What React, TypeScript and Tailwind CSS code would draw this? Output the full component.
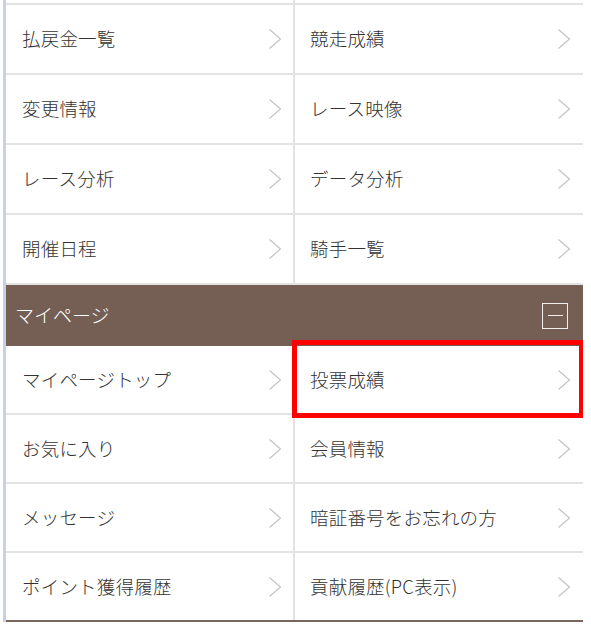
import React from "react";

const Chevron = () => (
  <svg width="14" height="22" viewBox="0 0 14 22" fill="none" className="shrink-0">
    <path d="M1.5 1.5 L12.5 11 L1.5 20.5" stroke="#c4c4c4" strokeWidth="1.2" />
  </svg>
);

const Cell = ({ label, left }: { label: string; left?: boolean }) => (
  <div
    className={
      left
        ? "w-[287px] h-full flex items-center justify-between pl-[16px] pr-[11px]"
        : "flex-1 h-full flex items-center justify-between pl-[15px] pr-[12px] border-l-2 border-[#e3e3e3]"
    }
  >
    <span className="text-[18.5px] font-light text-[#333333] tracking-[0.2px]">{label}</span>
    <Chevron />
  </div>
);

const Row = ({ a, b, last, short }: { a: string; b: string; last?: boolean; short?: boolean }) => (
  <div
    className={
      "flex border-b-2 " +
      (short ? "h-[69px] " : "h-[70px] ") +
      (last ? "border-[#7a665c]" : "border-[#e3e3e3]")
    }
  >
    <Cell label={a} left />
    <Cell label={b} />
  </div>
);

export default function App() {
  return (
    <div
      className="w-[591px] h-[625px] bg-white overflow-hidden pl-[3px] relative"
      style={{ fontFamily: '"Noto Sans CJK JP", "Noto Sans", sans-serif' }}
    >
      <div className="w-[580px] border-l-[3px] border-[#c8d0e3]">
        <div className="flex h-[3px] border-b-2 border-[#e3e3e3] box-content">
          <div className="w-[287px]" />
          <div className="flex-1 border-l-2 border-[#e3e3e3]" />
        </div>
        <Row a="払戻金一覧" b="競走成績" />
        <Row a="変更情報" b="レース映像" />
        <Row a="レース分析" b="データ分析" />
        <Row a="開催日程" b="騎手一覧" />
        <div className="h-[61px] bg-[#755f55] flex items-center justify-between pl-[9px] pr-[15px]">
          <span className="text-[19px] font-light text-white">マイページ</span>
          <div className="w-[26px] h-[26px] border-[1.5px] border-[#f2eeec] flex items-center justify-center">
            <div className="w-[15px] h-[1.5px] bg-[#f2eeec]" />
          </div>
        </div>
        <Row a="マイページトップ" b="投票成績" short />
        <Row a="お気に入り" b="会員情報" short />
        <Row a="メッセージ" b="暗証番号をお忘れの方" short />
        <Row a="ポイント獲得履歴" b="貢献履歴(PC表示)" short last />
      </div>
      <div className="absolute left-[292px] top-[340px] w-[291px] h-[78px] border-[5px] border-r-4 border-[#ff0000]" />
    </div>
  );
}
